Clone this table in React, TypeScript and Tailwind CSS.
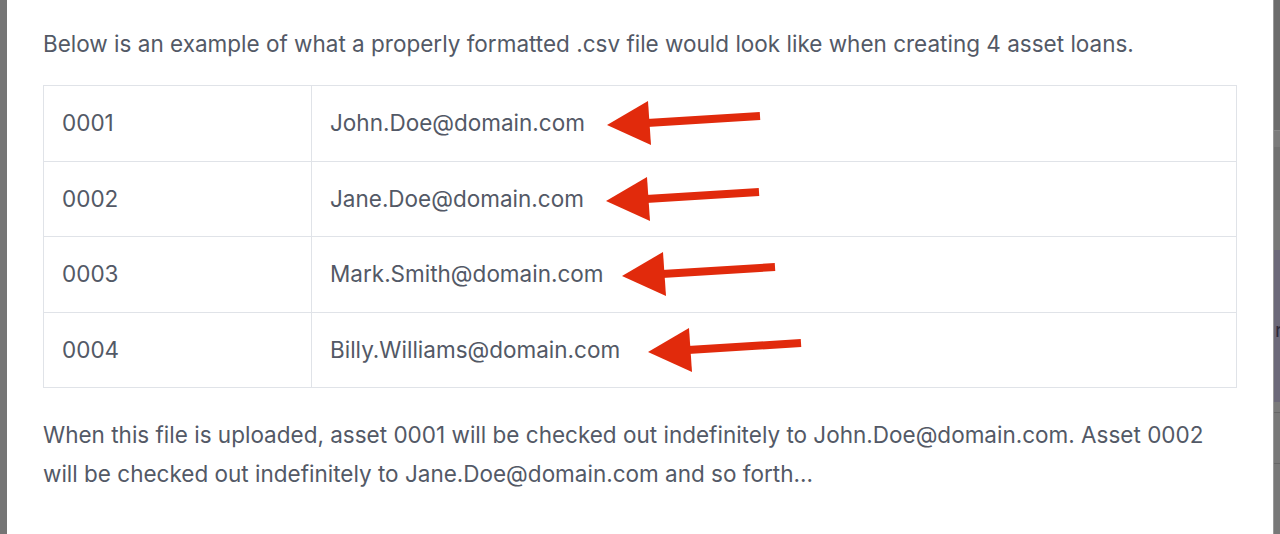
import React from "react"

const rows = [
  { id: "0001", email: "John.Doe@domain.com", gap: "ml-[20px]" },
  { id: "0002", email: "Jane.Doe@domain.com", gap: "ml-[20px]" },
  { id: "0003", email: "Mark.Smith@domain.com", gap: "ml-[16px]" },
  { id: "0004", email: "Billy.Williams@domain.com", gap: "ml-[26px]" },
]

function RedArrow({ className }: { className?: string }) {
  return (
    <svg width="158" height="48" viewBox="0 0 158 48" className={className}>
      <line x1="42" y1="24" x2="155" y2="17" stroke="#e12a0c" strokeWidth="8" />
      <polygon points="2,26 43,2 46,46" fill="#e12a0c" />
    </svg>
  )
}

export default function App() {
  return (
    <div
      className="flex h-[534px] w-full overflow-hidden text-[#535966]"
      style={{ fontFamily: "Inter, 'Noto Sans', sans-serif" }}
    >
      {/* backdrop left */}
      <div className="w-[7px] shrink-0 bg-[#757575]" />

      {/* modal body */}
      <div className="flex-1 bg-white px-9 pt-[25px]">
        <p className="text-[22.5px] leading-[38px]">
          Below is an example of what a properly formatted .csv file would look like when creating 4 asset loans.
        </p>

        <div className="mt-[22px] border-b border-l border-r border-[#e0e3e8]">
          {rows.map((row) => (
            <div key={row.id} className="flex h-[75.5px] border-t border-[#e0e3e8]">
              <div className="flex w-[268px] shrink-0 items-center border-r border-[#e0e3e8] pl-[18px] text-[22.5px]">
                {row.id}
              </div>
              <div className="flex flex-1 items-center pl-[18px] text-[22.5px]">
                <span>{row.email}</span>
                <RedArrow className={row.gap} />
              </div>
            </div>
          ))}
        </div>

        <p className="mt-[27px] text-[22.5px] leading-[39px]">
          When this file is uploaded, asset 0001 will be checked out indefinitely to John.Doe@domain.com. Asset 0002
          will be checked out indefinitely to Jane.Doe@domain.com and so forth...
        </p>
      </div>

      {/* backdrop right, page behind the modal */}
      <div className="flex w-[7px] shrink-0 flex-col border-l border-[#9a9a9a]">
        <div className="h-[130px] bg-[#6c6c6c]" />
        <div className="h-[17px] border-t border-[#888] bg-[#7b7b7b]" />
        <div className="h-[63px] bg-[#717171]" />
        <div className="h-[40px] bg-[#787878]" />
        <div className="relative h-[152px] overflow-hidden bg-[#6c6979]">
          <span className="absolute left-[1px] top-[70px] text-[20px] leading-none text-[#2f2a3a]">r</span>
        </div>
        <div className="h-[10px] bg-[#7a7a7a]" />
        <div className="h-[51px] border-t border-[#666] bg-[#787878]" />
        <div className="flex-1 border-t border-[#666] bg-[#787878]" />
      </div>
    </div>
  )
}
